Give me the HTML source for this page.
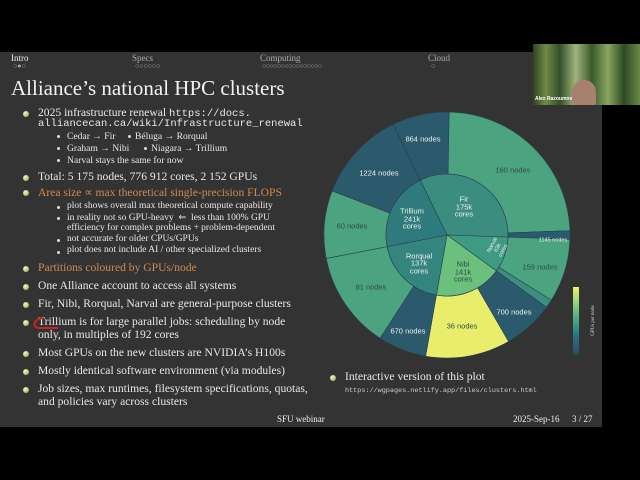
<!DOCTYPE html>
<html><head><meta charset="utf-8"><style>
body{margin:0;width:640px;height:480px;background:#000;overflow:hidden;position:relative;font-family:"Liberation Serif",serif;color:#e8e8e8}
#slide{position:absolute;left:0;top:52px;width:602px;height:375px;background:#333333}
.t{position:absolute;white-space:nowrap}
.nav{font-size:9px;color:#ccc}
.navd{font-size:7px;color:#aaa}
.b{position:absolute;width:6px;height:6px;border-radius:50%;background:radial-gradient(circle at 35% 35%,#f4f8d0,#b8c070 60%,#7a8040)}
.s{position:absolute;width:3px;height:3px;border-radius:50%;background:#ddd;margin-top:-2px}
.l1{font-size:11.6px}
.l2{font-size:9.6px}
.l3{font-size:9.5px}
.mono{font-family:"Liberation Mono",monospace}
.or{color:#d08a50}
</style></head><body>
<div id="slide"></div>
<div class="t nav" style="left:11px;top:53px;color:#eee">Intro</div>
<div class="t navd" style="left:13px;top:62px">○●○</div>
<div class="t nav" style="left:132px;top:53px;color:#aaa">Specs</div>
<div class="t navd" style="left:135px;top:62px">○○○○○○</div>
<div class="t nav" style="left:260px;top:53px;color:#aaa">Computing</div>
<div class="t navd" style="left:262px;top:62px;letter-spacing:-0.5px">○○○○○○○○○○○○○○○○</div>
<div class="t nav" style="left:428px;top:53px;color:#aaa">Cloud</div>
<div class="t navd" style="left:431px;top:62px">○</div>
<div class="t" style="left:11px;top:76px;font-size:21px;color:#f2f2f2">Alliance’s national HPC clusters</div>

<div class="b" style="left:23px;top:111px"></div>
<div class="t l1" style="left:38px;top:106px">2025 infrastructure renewal <span class="mono" style="font-size:10.5px">https://docs.</span></div>
<div class="t mono" style="left:38px;top:118px;font-size:10.5px">alliancecan.ca/wiki/Infrastructure_renewal</div>
<div class="s" style="left:57px;top:137px"></div><div class="t l2" style="left:67px;top:131px">Cedar → Fir</div>
<div class="s" style="left:128px;top:137px"></div><div class="t l2" style="left:135px;top:131px">Béluga → Rorqual</div>
<div class="s" style="left:57px;top:149px"></div><div class="t l2" style="left:67px;top:143px">Graham → Nibi</div>
<div class="s" style="left:144px;top:149px"></div><div class="t l2" style="left:151px;top:143px">Niagara → Trillium</div>
<div class="s" style="left:57px;top:161px"></div><div class="t l2" style="left:67px;top:155px">Narval stays the same for now</div>
<div class="b" style="left:23px;top:175px"></div>
<div class="t l1" style="left:38px;top:170px">Total: 5 175 nodes, 776 912 cores, 2 152 GPUs</div>
<div class="b" style="left:23px;top:190px"></div>
<div class="t l1 or" style="left:38px;top:185px">Area size ∝ max theoretical single-precision FLOPS</div>
<div class="s" style="left:57px;top:208px"></div><div class="t l3" style="left:67px;top:201px">plot shows overall max theoretical compute capability</div>
<div class="s" style="left:57px;top:219px"></div><div class="t l3" style="left:67px;top:212px">in reality not so GPU-heavy &nbsp;⇐ &nbsp;less than 100% GPU</div>
<div class="t l3" style="left:67px;top:223px">efficiency for complex problems + problem-dependent</div>
<div class="s" style="left:57px;top:241px"></div><div class="t l3" style="left:67px;top:234px">not accurate for older CPUs/GPUs</div>
<div class="s" style="left:57px;top:253px"></div><div class="t l3" style="left:67px;top:245px">plot does not include AI / other specialized clusters</div>
<div class="b" style="left:23px;top:266px"></div>
<div class="t l1 or" style="left:38px;top:261px">Partitions coloured by GPUs/node</div>
<div class="b" style="left:23px;top:284px"></div>
<div class="t l1" style="left:38px;top:279px">One Alliance account to access all systems</div>
<div class="b" style="left:23px;top:302px"></div>
<div class="t l1" style="left:38px;top:297px">Fir, Nibi, Rorqual, Narval are general-purpose clusters</div>
<div class="b" style="left:23px;top:320px"></div>
<div class="t l1" style="left:38px;top:315px">Trillium is for large parallel jobs: scheduling by node</div>
<div class="t l1" style="left:38px;top:328px">only, in multiples of 192 cores</div>
<div class="b" style="left:23px;top:351px"></div>
<div class="t l1" style="left:38px;top:346px">Most GPUs on the new clusters are NVIDIA’s H100s</div>
<div class="b" style="left:23px;top:369px"></div>
<div class="t l1" style="left:38px;top:364px">Mostly identical software environment (via modules)</div>
<div class="b" style="left:23px;top:387px"></div>
<div class="t l1" style="left:38px;top:382px">Job sizes, max runtimes, filesystem specifications, quotas,</div>
<div class="t l1" style="left:38px;top:395px">and policies vary across clusters</div>
<svg style="position:absolute;left:30px;top:316px" width="32" height="16"><path d="M12 2 C4 4 2 10 8 12 L28 12" stroke="#d02020" stroke-width="2" fill="none"/></svg>

<div class="b" style="left:330px;top:375px"></div>
<div class="t l1" style="left:345px;top:370px">Interactive version of this plot</div>
<div class="t mono" style="left:345px;top:387px;font-size:6.8px;color:#ccc">https://wgpages.netlify.app/files/clusters.html</div>
<div class="t" style="left:277px;top:414px;font-size:9px;color:#eee">SFU webinar</div>
<div class="t" style="left:513px;top:414px;font-size:9px;color:#eee">2025-Sep-16</div>
<div class="t" style="left:572px;top:414px;font-size:9px;color:#eee">3 / 27</div>

<svg id="ch" style="position:absolute;left:0;top:0" width="640" height="480"></svg>
<div style="position:absolute;left:573px;top:287px;width:6px;height:68px;background:linear-gradient(#f0f070,#7cc97c 30%,#3a9a85 55%,#2a6f80 75%,#284a5e)"></div>
<div class="t" style="left:578px;top:318px;font-size:5px;color:#ddd;transform:rotate(-90deg)">GPUs per node</div>

<div style="position:absolute;left:533px;top:44px;width:107px;height:61px;background:linear-gradient(90deg,#2e4420,#6f8a48 12%,#34502a 25%,#9fb57a 40%,#3a5a2c 55%,#8aa560 70%,#2c4a22 85%,#6a8a48)"></div>
<div style="position:absolute;left:572px;top:80px;width:24px;height:25px;border-radius:12px 12px 2px 2px;background:#a88070"></div>
<div class="t" style="left:535px;top:96px;font-size:5px;color:#fff;font-family:'Liberation Sans',sans-serif;font-weight:bold">Alex Razoumov</div>

<script>
var cx=447,cy=235,R=123,r=61,s='';
function p(a,rad){a=(a-90)*Math.PI/180;return [cx+rad*Math.cos(a),cy+rad*Math.sin(a)];}
function seg(a0,a1,r0,r1,c){var A=p(a0,r1),B=p(a1,r1),C=p(a1,r0),D=p(a0,r0),l=(a1-a0)>180?1:0;
s+='<path d="M'+A+' A'+r1+','+r1+' 0 '+l+' 1 '+B+' L'+C+(r0>0?' A'+r0+','+r0+' 0 '+l+' 0 '+D:'')+' Z" fill="'+c+'" stroke="#2a4050" stroke-width="0.6"/>';}
function tx(x,y,t,c,fs){s+='<text x="'+x+'" y="'+(y+2.5)+'" fill="'+c+'" font-size="'+(fs||7.5)+'" text-anchor="middle" font-family="Liberation Sans,sans-serif">'+t+'</text>';}
var dk='#2b5a6c',gr='#4ba37f';
seg(334,361,r,R,dk);seg(1,88,r,R,gr);seg(88,92,r,R,'#2a5a70');
seg(92,122,r,R,gr);seg(122,126,r,R,'#3c8f80');
seg(126,150,r,R,dk);seg(150,190,r,R,'#e8ee6c');
seg(190,213,r,R,dk);seg(213,259,r,R,gr);
seg(259,291,r,R,gr);seg(291,334,r,R,dk);
seg(334,452,0,r,'#3b8d80');seg(92,126,0,r,'#3e9a80');seg(126,190,0,r,'#6ac07c');
seg(190,259,0,r,'#35857f');seg(259,334,0,r,'#2f7a7c');
var w='#f0f0f0',d='#2e4d4a';
tx(423,139,'864 nodes',w);tx(513,170,'160 nodes',d);tx(379,173,'1224 nodes',w);
tx(352,226,'60 nodes',d);tx(371,287,'81 nodes',d);tx(408,331,'670 nodes',w);
tx(462,326,'36 nodes',d);tx(514,312,'700 nodes',w);tx(540,267,'159 nodes',d);
tx(553,239,'1145 nodes',w,5.5);
tx(464,199,'Fir',w);tx(464,207,'175k',w);tx(464,214,'cores',w);
tx(412,211,'Trillium',w);tx(412,219,'241k',w);tx(412,226,'cores',w);
tx(419,256,'Rorqual',w);tx(419,263,'137k',w);tx(419,271,'cores',w);
tx(463,264,'Nibi',d);tx(463,272,'141k',d);tx(463,279,'cores',d);
s+='<text transform="translate(498,248) rotate(-62)" fill="#eee" font-size="5.5" text-anchor="middle" font-family="Liberation Sans,sans-serif"><tspan x="0" y="-5">Narval</tspan><tspan x="0" y="1">63k</tspan><tspan x="0" y="7">cores</tspan></text>';
document.getElementById('ch').innerHTML=s;
</script>
</body></html>
